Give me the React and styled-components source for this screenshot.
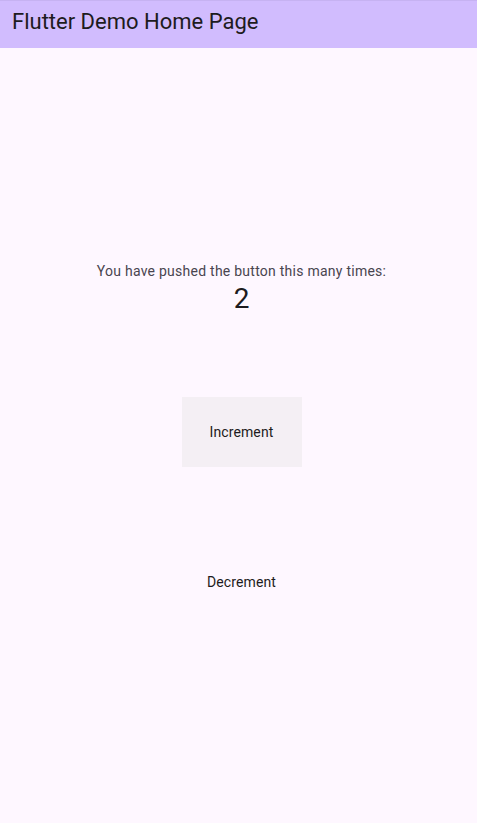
import React, { useState } from 'react';
import styled, { createGlobalStyle } from 'styled-components';

const GlobalStyle = createGlobalStyle`
  html, body {
    margin: 0;
    padding: 0;
    background: #fef7ff;
    font-family: Roboto, "Noto Sans", sans-serif;
  }
`;

export default function App() {
  const [count, setCount] = useState(2);
  return (
    <Page>
      <GlobalStyle />
      <AppBar>
        <Title>Flutter Demo Home Page</Title>
      </AppBar>
      <Body>
        <Label>You have pushed the button this many times:</Label>
        <Counter>{count}</Counter>
        <Button $filled onClick={() => setCount(count + 1)}>Increment</Button>
        <Button onClick={() => setCount(count - 1)}>Decrement</Button>
      </Body>
    </Page>
  );
}

const Page = styled.div`
  width: 100%;
  height: 100vh;
  display: flex;
  flex-direction: column;
  background: #fef7ff;
`;

const AppBar = styled.header`
  height: 48px;
  flex-shrink: 0;
  display: flex;
  align-items: center;
  padding: 0 12px;
  background: #d1bcfe;
  border-top: 1px solid #c6b2f2;
  box-sizing: border-box;
`;

const Title = styled.h1`
  margin: 0 0 6px;
  font-size: 22px;
  font-weight: 400;
  color: #1d1b20;
`;

const Body = styled.main`
  flex: 1;
  display: flex;
  flex-direction: column;
  align-items: center;
  justify-content: center;
  padding: 6px 0 0 6px;
`;

const Label = styled.div`
  font-size: 14px;
  line-height: 20px;
  letter-spacing: 0.25px;
  color: #49454f;
`;

const Counter = styled.div`
  font-size: 28px;
  line-height: 36px;
  color: #1d1b20;
  margin-bottom: 80px;
`;

const Button = styled.button`
  width: 120px;
  height: 70px;
  border: none;
  border-radius: 0;
  background: ${p => (p.$filled ? '#f4eff4' : 'transparent')};
  color: #1d1b20;
  font-family: Roboto, "Noto Sans", sans-serif;
  font-size: 14px;
  font-weight: 400;
  letter-spacing: 0.1px;
  cursor: pointer;
  & + & {
    margin-top: 80px;
  }
`;
